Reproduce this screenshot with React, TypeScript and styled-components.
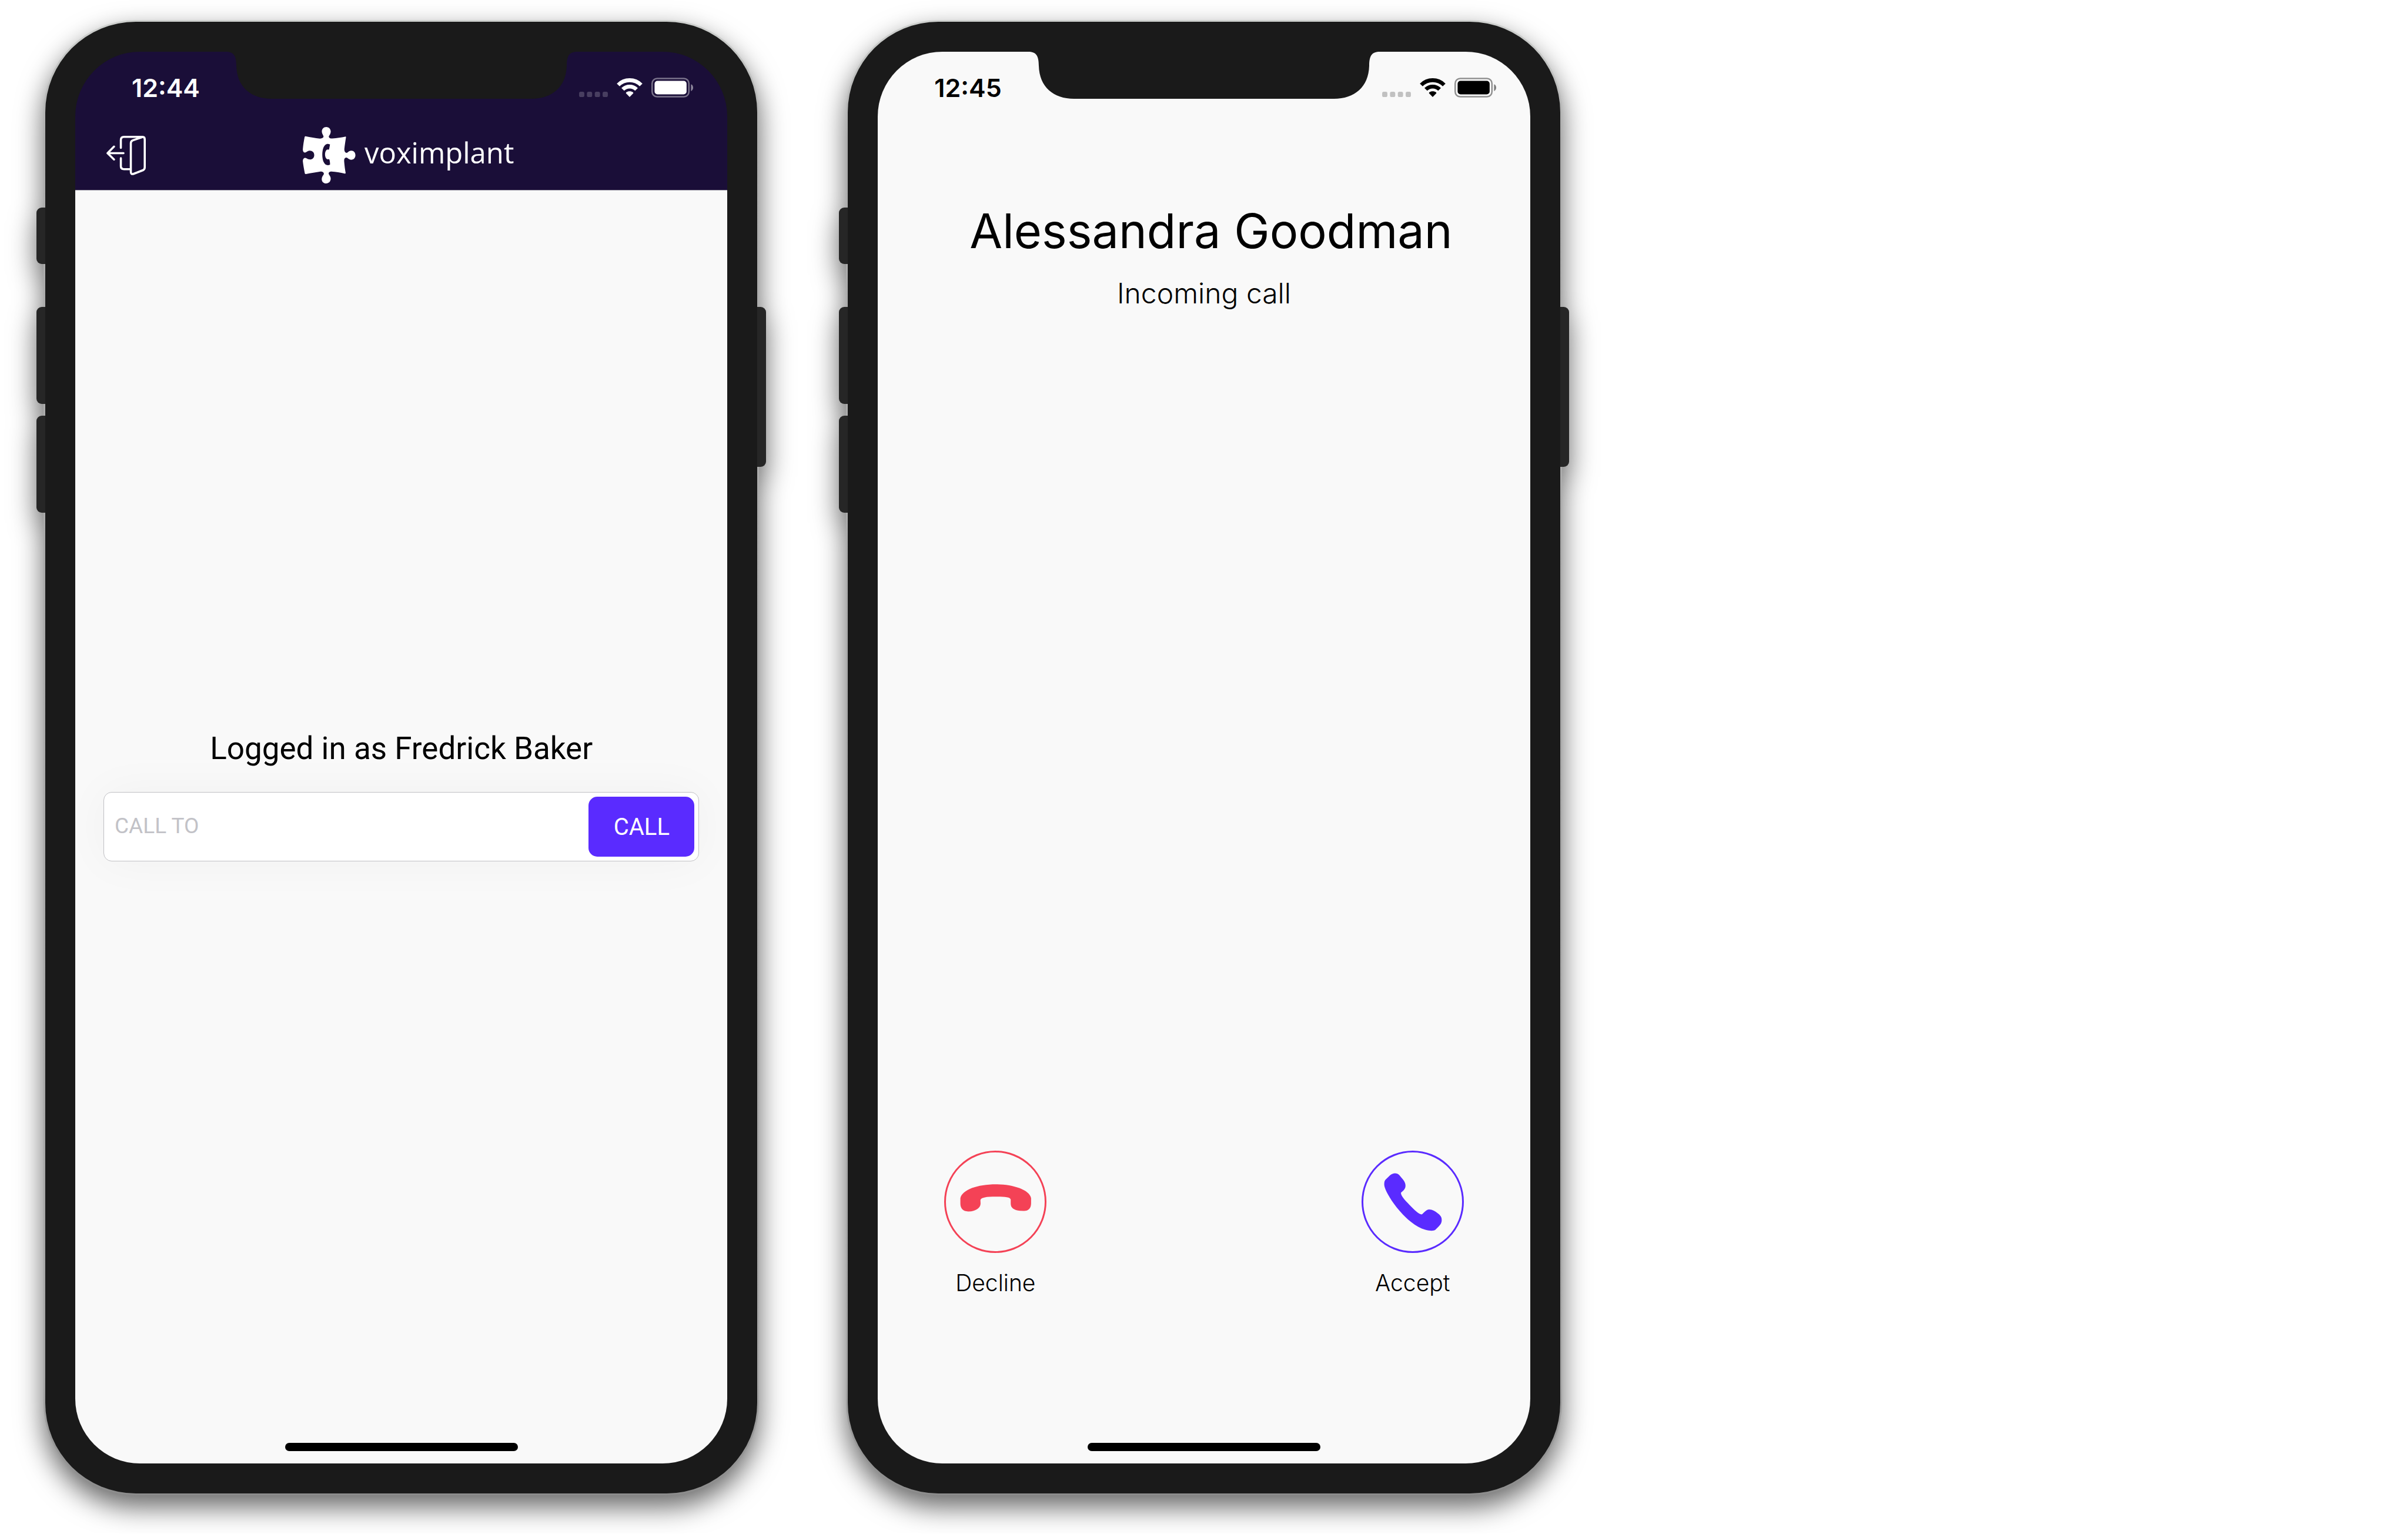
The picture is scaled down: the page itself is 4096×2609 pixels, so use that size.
import React from "react";
import styled, { createGlobalStyle } from "styled-components";

const ink = "#1a1a1a";
const surface = "#f9f9f9";
const navy = "#1a0e38";
const violet = "#5a2bff";
const red = "#f44256";

const GlobalStyle = createGlobalStyle`
  * { box-sizing: border-box; }
  body {
    margin: 0;
    background: #ffffff;
    color: #000000;
    font-family: Inter, "Liberation Sans", sans-serif;
  }
  button, input { font: inherit; margin: 0; }
`;

const Gallery = styled.main`
  display: grid;
  grid-template-columns: repeat(3, minmax(0, 1fr));
  align-items: start;
  padding: 34px 0 65px;
`;

const Device = styled.section`
  position: relative;
  margin: 0 74px;
  padding: 3px;
  border-radius: 157px;
  background: linear-gradient(#cfd1cf, #adadad 8%, #a6a6a6 92%, #8c8c8c);
  filter: drop-shadow(0 20px 23px rgba(0, 0, 0, 0.6));
`;

const Body = styled.div`
  position: relative;
  padding: 51px;
  border-radius: 154px;
  background: ${ink};
`;

const SideKey = styled.span<{ $side: "left" | "right"; $top: number; $length: number }>`
  position: absolute;
  ${(p) => p.$side}: -12px;
  top: ${(p) => p.$top}px;
  width: 18px;
  height: ${(p) => p.$length}px;
  background: #262626;
  border-radius: ${(p) => (p.$side === "left" ? "9px 0 0 9px" : "0 9px 9px 0")};
`;

const Screen = styled.div`
  position: relative;
  display: flex;
  flex-direction: column;
  aspect-ratio: 1110 / 2402;
  border-radius: 110px;
  overflow: hidden;
`;

const NotchShape = styled.svg`
  position: absolute;
  top: 0;
  left: 50%;
  width: 598px;
  height: 80px;
  margin-left: -299px;
  fill: ${ink};
`;

const HomeBar = styled.span`
  position: absolute;
  left: 50%;
  bottom: 21px;
  width: 396px;
  height: 14px;
  margin-left: -198px;
  border-radius: 7px;
  background: #000000;
`;

const StatusBar = styled.div<{ $dark?: boolean }>`
  display: flex;
  align-items: center;
  justify-content: space-between;
  height: 121px;
  padding: 0 58px 0 96px;
  color: ${(p) => (p.$dark ? "#ffffff" : "#000000")};
  background: ${(p) => (p.$dark ? navy : surface)};
`;

const Clock = styled.time`
  font-size: 43px;
  line-height: 50px;
  font-weight: 600;
`;

const StatusIcons = styled.div`
  display: flex;
  align-items: center;
  gap: 15px;
  svg { display: block; fill: currentColor; }
`;

const NavBar = styled.header`
  display: grid;
  grid-template-columns: 1fr auto 1fr;
  align-items: center;
  height: 115px;
  padding: 0 29px 4px 53px;
  border-bottom: 1px solid #a5a3ad;
  background: ${navy};
  color: #ffffff;
`;

const IconButton = styled.button`
  display: flex;
  justify-self: start;
  padding: 0;
  border: 0;
  background: none;
  color: inherit;
  cursor: pointer;
`;

const Brand = styled.div`
  display: flex;
  align-items: center;
  gap: 15px;
`;

const BrandName = styled.span`
  padding-bottom: 10px;
  font-family: "Open Sans", "Noto Sans", sans-serif;
  font-size: 49px;
  line-height: 64px;
`;

const Dialer = styled.div`
  flex: 1;
  display: grid;
  grid-template-rows: 1fr auto 1fr;
  padding: 0 48px;
  background: ${surface};
  font-family: Roboto, "Liberation Sans", sans-serif;
`;

const Account = styled.h1`
  align-self: end;
  margin: 0 0 42px;
  font-size: 53px;
  line-height: 64px;
  font-weight: 400;
  text-align: center;
`;

const CallForm = styled.form`
  display: flex;
  padding: 7px;
  border: 1px solid #c0c0c4;
  border-radius: 14px;
  background: #ffffff;
  box-shadow: 0 0 80px rgba(0, 0, 0, 0.04);
`;

const CallField = styled.input`
  flex: 1;
  min-width: 0;
  padding: 0 11px 4px;
  border: 0;
  outline: 0;
  background: none;
  font-size: 37px;
  &::placeholder { color: #c2c2c7; opacity: 1; }
`;

const CallButton = styled.button`
  width: 180px;
  height: 102px;
  padding: 0;
  border: 0;
  border-radius: 15px;
  background: ${violet};
  color: #ffffff;
  font-size: 40px;
  cursor: pointer;
`;

const Incoming = styled.div`
  flex: 1;
  display: flex;
  flex-direction: column;
  justify-content: space-between;
  padding: 132px 113px 283px;
  background: ${surface};
`;

const Caller = styled.div`
  display: flex;
  flex-direction: column;
  align-items: center;
  gap: 24px;
`;

const CallerName = styled.h1`
  margin: 0;
  padding-left: 24px;
  font-size: 81px;
  line-height: 104px;
  font-weight: 400;
  white-space: nowrap;
`;

const CallState = styled.p`
  margin: 0;
  font-size: 48px;
  line-height: 60px;
  font-weight: 300;
`;

const Actions = styled.div`
  display: flex;
  justify-content: space-between;
`;

const Action = styled.div`
  display: flex;
  flex-direction: column;
  align-items: center;
  gap: 27px;
  width: 174px;
`;

const RoundButton = styled.button<{ $tone: string }>`
  width: 174px;
  height: 174px;
  padding: 0;
  border: 3px solid ${(p) => p.$tone};
  border-radius: 50%;
  background: none;
  color: ${(p) => p.$tone};
  cursor: pointer;
  svg { display: block; width: 100%; height: 100%; fill: currentColor; }
`;

const ActionLabel = styled.span`
  font-size: 39px;
  line-height: 48px;
  font-weight: 300;
`;

function Status({ time, dark }: { time: string; dark?: boolean }) {
  return (
    <StatusBar $dark={dark}>
      <Clock>{time}</Clock>
      <StatusIcons>
        <svg width="49" height="32" viewBox="0 0 55 36" opacity={dark ? 0.2 : 0.22} aria-hidden="true">
          {[0, 15, 30, 45].map((x) => (
            <rect key={x} x={x} y="26" width="10" height="10" rx="3.2" />
          ))}
        </svg>
        <svg width="44" height="32" viewBox="0 0 49 36" aria-hidden="true">
          <g fill="none" stroke="currentColor">
            <path strokeWidth="7.4" d="M2.6 12.9A30.8 30.8 0 0 1 46.4 12.9" />
            <path strokeWidth="7.4" d="M11.4 21.4A18.5 18.5 0 0 1 37.6 21.4" />
          </g>
          <path d="M24.5 36L17.4 28.6C17.2 27 20.5 25 24.5 25S31.8 27 31.6 28.6Z" />
        </svg>
        <svg width="71" height="34" viewBox="0 0 79 37.4" aria-hidden="true">
          <rect x="1.4" y="1.4" width="69.6" height="34.6" rx="9.5" fill="none" stroke="currentColor" strokeWidth="2.8" opacity="0.42" />
          <rect x="6" y="6" width="60.6" height="25.4" rx="5.5" />
          <path d="M75 12.3C77.6 13.4 79 15.8 79 18.7S77.6 24.2 75 25.3Z" opacity="0.5" />
        </svg>
      </StatusIcons>
    </StatusBar>
  );
}

function Phone({ children }: { children: React.ReactNode }) {
  return (
    <Device>
      <SideKey $side="left" $top={319} $length={96} />
      <SideKey $side="left" $top={488} $length={165} />
      <SideKey $side="left" $top={673} $length={165} />
      <SideKey $side="right" $top={488} $length={272} />
      <Body>
        <Screen>
          {children}
          <NotchShape viewBox="0 0 598 80" aria-hidden="true">
            <path d="M0 0C13 0 18 6 18 24C19 60 43 80 78 80H520C555 80 579 60 580 24C580 6 585 0 598 0Z" />
          </NotchShape>
          <HomeBar />
        </Screen>
      </Body>
    </Device>
  );
}

export default function App() {
  return (
    <>
      <GlobalStyle />
      <Gallery>
        <Phone>
          <Status time="12:44" dark />
          <NavBar>
            <IconButton type="button" aria-label="Log out">
              <svg
                width="67"
                height="67"
                viewBox="0 0 75 75"
                fill="none"
                stroke="currentColor"
                strokeWidth="4"
                strokeLinecap="round"
                strokeLinejoin="round"
                aria-hidden="true"
              >
                <path d="M27.5 23V8Q27.5 2 33.5 2H69Q73 2 73 7V60Q73 64 69.500 65.500L51.500 72.500Q46.500 74 46.500 68.500V14Q46.500 10 50.500 8.500L68 2.500" />
                <path d="M27.500 42.500V58Q27.500 63.500 33.500 63.500H45" />
                <path d="M32.500 33H2.500M14.500 20.500L2.200 33L14.500 45" />
              </svg>
            </IconButton>
            <Brand>
              <svg width="90" height="96" viewBox="51 66 301 322" fill="#ffffff" aria-hidden="true">
                <path
                  fillRule="evenodd"
                  d="M66 119C95 125 120 129 148 132Q162 133 168 125C171 119 166 112 163 106C153 86 165 66 185 66C205 66 217 88 206 108C201 116 196 121 202 127C206 131 212 132 220 131C245 129 270 125 292 121Q298 119 297 126C293 150 290 172 288 190C287 203 291 211 297 213C305 215 309 207 315 204C335 195 351 208 351 227C351 246 334 260 314 249C307 245 303 239 295 241C287 244 286 252 287 265C289 290 292 310 295 327Q296 333 290 332C265 326 240 322 215 320C205 320 198 324 198 331C199 338 205 343 208 350C215 370 203 388 184 388C165 388 154 371 161 352C164 344 170 340 171 333C171 324 163 320 152 320C125 324 98 329 69 334Q63 335 62 329C57 303 53 280 51 262C50 250 56 242 65 242C72 243 76 248 82 250C100 256 116 245 116 226C116 208 99 197 82 203C74 206 71 211 64 212C55 212 50 204 51 192C53 168 57 145 61 124Q62 118 66 119ZM206 166C190 157 176 165 168 185C160 207 160 240 168 262C176 282 190 288 206 281Q207 268 203 254Q202 248 197 250Q189 252 183 244C176 232 176 214 182 203Q187 193 195 195Q200 196 201 193Z"
                />
              </svg>
              <BrandName>voximplant</BrandName>
            </Brand>
          </NavBar>
          <Dialer>
            <Account>Logged in as Fredrick Baker</Account>
            <CallForm onSubmit={(e) => e.preventDefault()}>
              <CallField type="text" placeholder="CALL TO" aria-label="Call to" />
              <CallButton type="submit">CALL</CallButton>
            </CallForm>
          </Dialer>
        </Phone>

        <Phone>
          <Status time="12:45" />
          <Incoming>
            <Caller>
              <CallerName>Alessandra Goodman</CallerName>
              <CallState>Incoming call</CallState>
            </Caller>
            <Actions>
              <Action>
                <RoundButton type="button" $tone={red} aria-labelledby="decline-label">
                  <svg viewBox="120 96 567 567" aria-hidden="true">
                    <path d="M203 358C215 310 300 279 408 279C505 279 600 310 609 358L609 388C609 415 595 432 568 432L545 431C510 428 492 415 492 390L492 366C488 352 460 350 408 350C350 350 325 354 318 369L319 390C318 415 295 430 265 434L248 435C218 435 203 418 203 390Z" />
                  </svg>
                </RoundButton>
                <ActionLabel id="decline-label">Decline</ActionLabel>
              </Action>
              <Action>
                <RoundButton type="button" $tone={violet} aria-labelledby="accept-label">
                  <svg viewBox="135 96 567 567" aria-hidden="true">
                    <path d="M262 253L288 228C306 212 328 212 342 227L356 244C372 262 378 275 377 290C376 308 362 318 351 327C350 345 372 368 400 397C430 427 452 450 470 452C482 445 490 427 512 423C532 423 548 434 562 445C578 456 585 468 585 482C586 500 578 510 570 519L549 540C535 551 490 545 450 523C400 495 350 445 310 390C275 340 255 300 255 280C255 265 258 257 262 253Z" />
                  </svg>
                </RoundButton>
                <ActionLabel id="accept-label">Accept</ActionLabel>
              </Action>
            </Actions>
          </Incoming>
        </Phone>
      </Gallery>
    </>
  );
}
